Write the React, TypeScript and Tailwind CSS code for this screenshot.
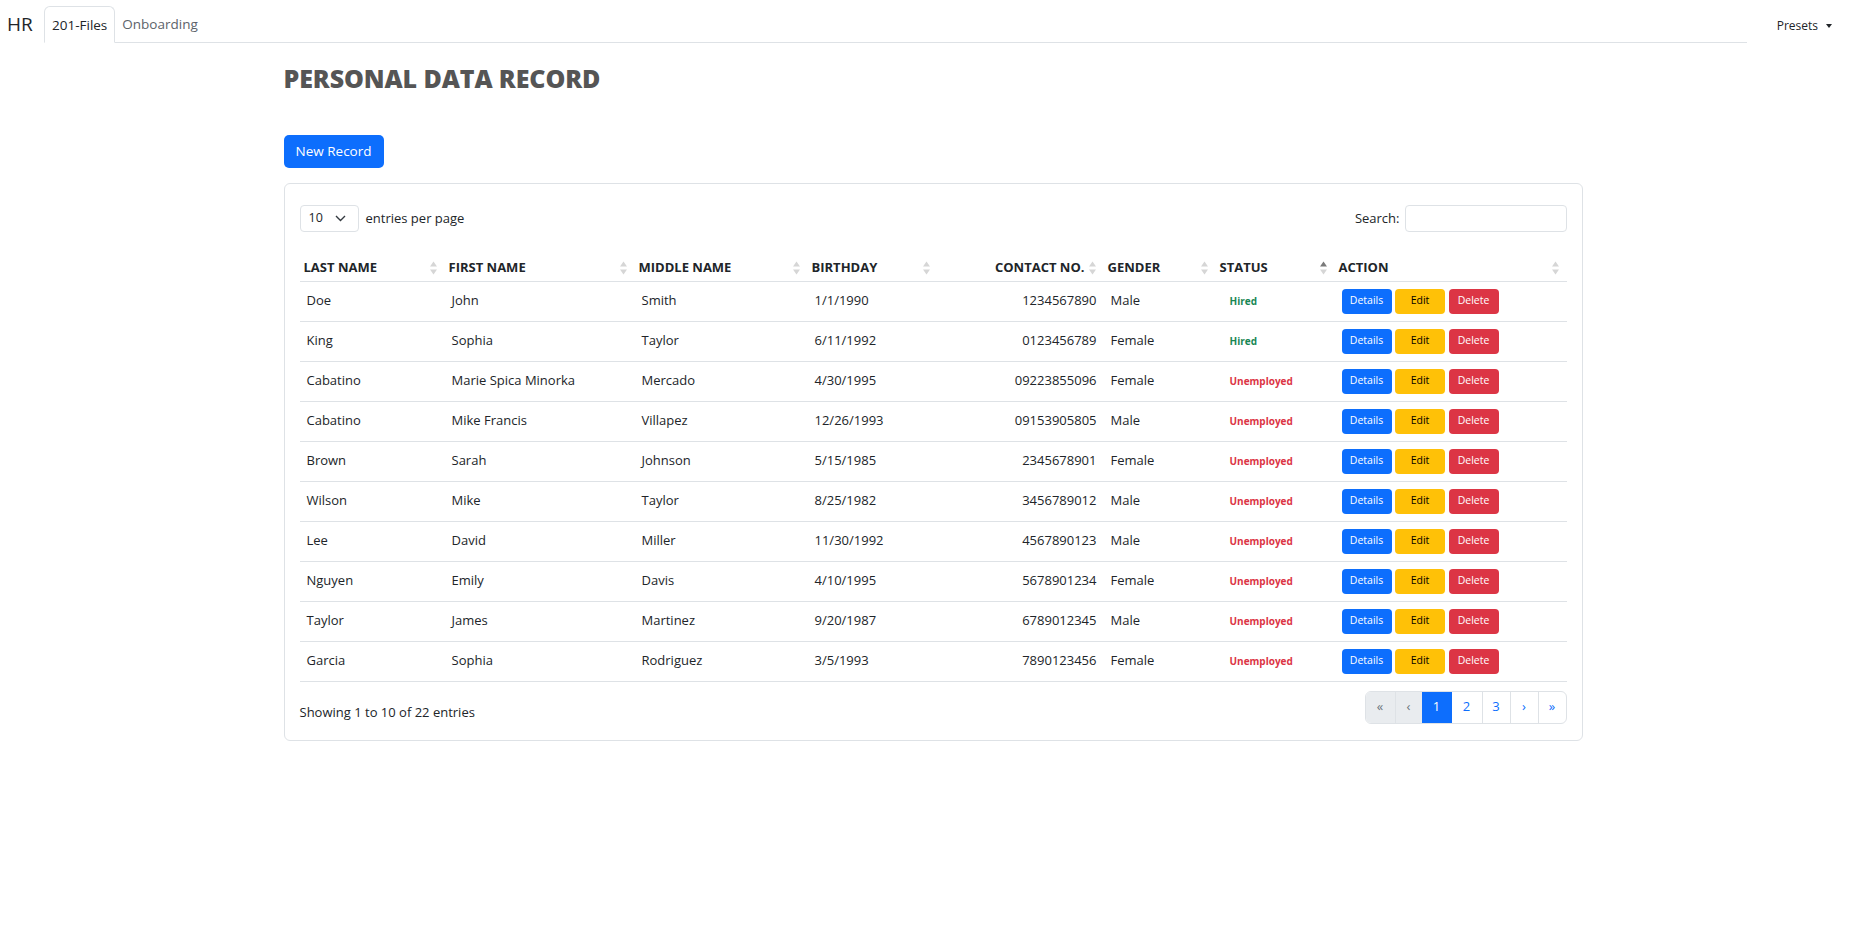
import React from 'react';

type Row = {
  last: string;
  first: string;
  middle: string;
  birthday: string;
  contact: string;
  gender: string;
  status: 'Hired' | 'Unemployed';
};

const rows: Row[] = [
  { last: 'Doe', first: 'John', middle: 'Smith', birthday: '1/1/1990', contact: '1234567890', gender: 'Male', status: 'Hired' },
  { last: 'King', first: 'Sophia', middle: 'Taylor', birthday: '6/11/1992', contact: '0123456789', gender: 'Female', status: 'Hired' },
  { last: 'Cabatino', first: 'Marie Spica Minorka', middle: 'Mercado', birthday: '4/30/1995', contact: '09223855096', gender: 'Female', status: 'Unemployed' },
  { last: 'Cabatino', first: 'Mike Francis', middle: 'Villapez', birthday: '12/26/1993', contact: '09153905805', gender: 'Male', status: 'Unemployed' },
  { last: 'Brown', first: 'Sarah', middle: 'Johnson', birthday: '5/15/1985', contact: '2345678901', gender: 'Female', status: 'Unemployed' },
  { last: 'Wilson', first: 'Mike', middle: 'Taylor', birthday: '8/25/1982', contact: '3456789012', gender: 'Male', status: 'Unemployed' },
  { last: 'Lee', first: 'David', middle: 'Miller', birthday: '11/30/1992', contact: '4567890123', gender: 'Male', status: 'Unemployed' },
  { last: 'Nguyen', first: 'Emily', middle: 'Davis', birthday: '4/10/1995', contact: '5678901234', gender: 'Female', status: 'Unemployed' },
  { last: 'Taylor', first: 'James', middle: 'Martinez', birthday: '9/20/1987', contact: '6789012345', gender: 'Male', status: 'Unemployed' },
  { last: 'Garcia', first: 'Sophia', middle: 'Rodriguez', birthday: '3/5/1993', contact: '7890123456', gender: 'Female', status: 'Unemployed' },
];

const SortArrows = ({ active = false, className = '' }: { active?: boolean; className?: string }) => (
  <svg width="7" height="14" viewBox="0 0 7 14" className={className}>
    <polygon points="0,5.5 3.5,0.5 7,5.5" fill={active ? '#7a7a7a' : '#d6d6d6'} />
    <polygon points="0,8.5 3.5,13.5 7,8.5" fill="#d6d6d6" />
  </svg>
);

const Th = ({ label, right = false, active = false }: { label: string; right?: boolean; active?: boolean }) => (
  <th className="h-[26px] border-b border-[#dee2e6] p-0 text-left font-bold">
    <div className="flex items-center pl-1 pr-2">
      {right ? (
        <>
          <span className="ml-auto">{label}</span>
          <SortArrows className="ml-1" />
        </>
      ) : (
        <>
          <span>{label}</span>
          <SortArrows active={active} className="ml-auto" />
        </>
      )}
    </div>
  </th>
);

const NavBar = () => (
  <div className="flex items-end pt-1.5">
    <span className="w-11 pb-[7px] pl-[7px] text-[19px] leading-6 text-[#212529]">HR</span>
    <ul className="flex flex-1 border-b border-[#dee2e6] text-[13.5px]">
      <li className="-mb-px rounded-t-md border border-b-white border-[#dee2e6] bg-white px-[7px] pb-[7px] pt-[9px] leading-[19px] text-[#212529]">
        201-Files
      </li>
      <li className="px-[7px] pb-[7px] pt-[9px] leading-[19px] text-[#5c636a]">Onboarding</li>
    </ul>
    <div className="flex items-center gap-2 self-start pl-[30px] pr-[34px] pt-[11px] text-[12px] text-[#212529]">
      <span>Presets</span>
      <span className="h-0 w-0 border-x-[3.5px] border-t-[4px] border-x-transparent border-t-[#212529]" />
    </div>
  </div>
);

const App = () => {
  return (
    <div className="min-h-[948px] bg-white font-['Open_Sans',sans-serif] text-[#212529]">
      <NavBar />
      <div className="mx-auto w-[1299px]">
        <h1 className="mt-[21px] text-[25px] font-extrabold leading-7 tracking-[-0.1px] text-[#555555]">
          PERSONAL DATA RECORD
        </h1>
        <button className="mt-[43px] h-[33px] rounded-[5px] bg-[#0d6efd] px-3 text-[13.5px] text-white">New Record</button>

        <div className="mt-[15px] rounded-[6px] border border-[#dee2e6] px-[15px] pb-[16px] pt-[21px]">
          <div className="flex items-center justify-between text-[13px]">
            <div className="flex items-center gap-[7px]">
              <div className="flex h-[27px] w-[59px] items-center justify-between rounded-[4px] border border-[#dee2e6] pl-2 pr-3 text-[12.5px]">
                <span>10</span>
                <svg width="11" height="7" viewBox="0 0 11 7">
                  <path d="M1 1l4.5 4.5L10 1" stroke="#343a40" strokeWidth="1.4" fill="none" />
                </svg>
              </div>
              <span>entries per page</span>
            </div>
            <div className="flex items-center gap-[5px]">
              <span>Search:</span>
              <div className="h-[27px] w-[162px] rounded-[4px] border border-[#dee2e6]" />
            </div>
          </div>

          <table className="mt-[23px] w-full table-fixed border-collapse text-[13px]">
            <colgroup>
              <col className="w-[145px]" />
              <col className="w-[190px]" />
              <col className="w-[173px]" />
              <col className="w-[130px]" />
              <col className="w-[166px]" />
              <col className="w-[112px]" />
              <col className="w-[119px]" />
              <col />
            </colgroup>
            <thead>
              <tr className="text-[13px] uppercase">
                <Th label="Last Name" />
                <Th label="First Name" />
                <Th label="Middle Name" />
                <Th label="Birthday" />
                <Th label="Contact No." right />
                <Th label="Gender" />
                <Th label="Status" active />
                <Th label="Action" />
              </tr>
            </thead>
            <tbody>
              {rows.map((r, i) => (
                <tr key={i} className="h-10 border-b border-[#dee2e6]">
                  <td className="pl-[7px]">{r.last}</td>
                  <td className="pl-[7px]">{r.first}</td>
                  <td className="pl-[7px]">{r.middle}</td>
                  <td className="pl-[7px]">{r.birthday}</td>
                  <td className="pr-[7px] text-right">{r.contact}</td>
                  <td className="pl-[7px]">{r.gender}</td>
                  <td className="pl-[14px]">
                    <span
                      className={
                        'text-[10px] font-bold ' + (r.status === 'Hired' ? 'text-[#198754]' : 'text-[#dc3545]')
                      }
                    >
                      {r.status}
                    </span>
                  </td>
                  <td className="pl-[7px]">
                    <div className="flex gap-[3.5px] text-[10.5px]">
                      <button className="h-[25px] w-[50px] rounded-[4px] bg-[#0d6efd] text-white">Details</button>
                      <button className="h-[25px] w-[50px] rounded-[4px] bg-[#ffc107] text-black">Edit</button>
                      <button className="h-[25px] w-[50px] rounded-[4px] bg-[#dc3545] text-white">Delete</button>
                    </div>
                  </td>
                </tr>
              ))}
            </tbody>
          </table>

          <div className="mt-[9px] flex items-center justify-between text-[13px]">
            <span className="pt-[11px]">Showing 1 to 10 of 22 entries</span>
            <div className="flex h-[33px] overflow-hidden rounded-[6px] border border-[#dee2e6] text-[13px]">
              <span className="flex w-[29px] items-center justify-center bg-[#e9ecef] text-[#6c757d]">«</span>
              <span className="flex w-[27px] items-center justify-center border-l border-[#dee2e6] bg-[#e9ecef] text-[#6c757d]">‹</span>
              <span className="flex w-[30px] items-center justify-center bg-[#0d6efd] text-white">1</span>
              <span className="flex w-[30px] items-center justify-center text-[#0d6efd]">2</span>
              <span className="flex w-[28px] items-center justify-center border-l border-[#dee2e6] text-[#0d6efd]">3</span>
              <span className="flex w-[28px] items-center justify-center border-l border-[#dee2e6] text-[#0d6efd]">›</span>
              <span className="flex w-[28px] items-center justify-center border-l border-[#dee2e6] text-[#0d6efd]">»</span>
            </div>
          </div>
        </div>
      </div>
    </div>
  );
};

export default App;
